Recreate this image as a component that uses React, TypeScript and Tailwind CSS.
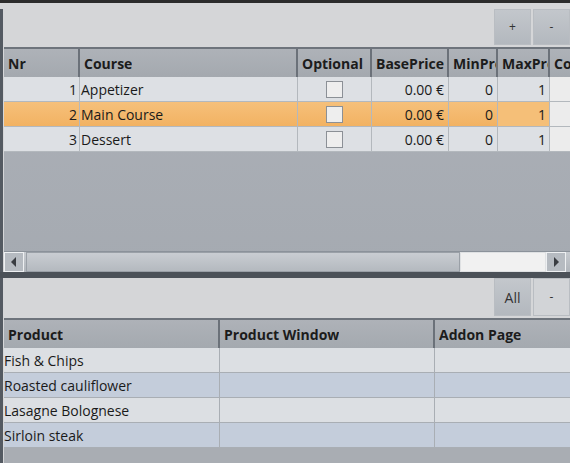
import React from 'react';

type Col = { key: string; title: string; width: number };

const courseCols: Col[] = [
  { key: 'nr', title: 'Nr', width: 76 },
  { key: 'course', title: 'Course', width: 218 },
  { key: 'optional', title: 'Optional', width: 74 },
  { key: 'basePrice', title: 'BasePrice', width: 77 },
  { key: 'minProducts', title: 'MinProducts', width: 49 },
  { key: 'maxProducts', title: 'MaxProducts', width: 52 },
  { key: 'color', title: 'Color', width: 60 },
];

const courses = [
  { nr: 1, course: 'Appetizer', basePrice: '0.00 €', min: 0, max: 1 },
  { nr: 2, course: 'Main Course', basePrice: '0.00 €', min: 0, max: 1 },
  { nr: 3, course: 'Dessert', basePrice: '0.00 €', min: 0, max: 1 },
];

const productCols: Col[] = [
  { key: 'product', title: 'Product', width: 216 },
  { key: 'window', title: 'Product Window', width: 215 },
  { key: 'addon', title: 'Addon Page', width: 140 },
];

const products = ['Fish & Chips', 'Roasted cauliflower', 'Lasagne Bolognese', 'Sirloin steak'];

const font = { fontFamily: '"Open Sans", "Noto Sans", sans-serif' };

const ToolButton: React.FC<{ label: string; pressed?: boolean; className?: string }> = ({
  label,
  pressed,
  className,
}) => (
  <button
    className={`w-[37px] flex items-center justify-center text-[12px] text-[#333] border border-[#b9bdc2] ${
      pressed ? 'bg-gradient-to-b from-[#c3c7cc] to-[#b3b8be]' : 'bg-[#d2d4d7]'
    } ${className ?? ''}`}
  >
    {label}
  </button>
);

const HeaderRow: React.FC<{ cols: Col[] }> = ({ cols }) => (
  <div className="flex h-[30px] border-t-2 border-[#6e747c] bg-gradient-to-b from-[#aeb2b8] to-[#a4a9af]">
    {cols.map((c) => (
      <div
        key={c.key}
        style={{ width: c.width }}
        className="shrink-0 flex items-center pl-[4px] border-r-2 border-[#6b7179] overflow-hidden whitespace-nowrap text-[14px] font-bold text-[#1c1c1c]"
      >
        <span className="block overflow-hidden">{c.title}</span>
      </div>
    ))}
  </div>
);

const Checkbox = () => (
  <div className="w-[17px] h-[17px] border border-[#8b9096] bg-[#eeeeee]" />
);

const ArrowButton: React.FC<{ dir: 'left' | 'right' }> = ({ dir }) => (
  <div className="w-[20px] h-full shrink-0 border border-[#eef0f2] bg-[#b6bbc1] flex items-center justify-center">
    <svg width="6" height="10" viewBox="0 0 6 10">
      <path d={dir === 'left' ? 'M5 0 L0 5 L5 10 Z' : 'M1 0 L6 5 L1 10 Z'} fill="#3a3d42" />
    </svg>
  </div>
);

export default function App() {
  return (
    <div style={font} className="w-[570px] h-[463px] overflow-hidden bg-[#d5d6d8] flex flex-col">
      <div className="h-[3px] shrink-0 bg-[#2c2c2c]" />

      <div className="flex flex-1 min-h-0">
        {/* dark frame edge on the left */}
        <div className="w-[3px] shrink-0 bg-[#545a62] mt-[6px]" />

        <div className="flex-1 min-w-0 flex flex-col pl-[1px]">
          {/* courses toolbar */}
          <div className="h-[44px] shrink-0 flex justify-end items-end pb-[2px] gap-[2px]">
            <ToolButton label="+" pressed className="h-[36px]" />
            <ToolButton label="-" pressed className="h-[36px]" />
          </div>

          {/* courses grid */}
          <div className="h-[225px] shrink-0 flex flex-col bg-gradient-to-b from-[#acb0b7] to-[#a5aab1] overflow-hidden">
            <HeaderRow cols={courseCols} />
            {courses.map((r) => {
              const selected = r.nr === 2;
              return (
                <div
                  key={r.nr}
                  className={`flex h-[25px] shrink-0 border-b border-[#b3b8bd] text-[14px] text-[#1a1a1a] ${
                    selected ? 'bg-gradient-to-b from-[#f6c07a] to-[#f2b262]' : 'bg-[#dde0e4]'
                  }`}
                >
                  <div style={{ width: 76 }} className="shrink-0 flex items-center justify-end pr-[2px] border-r border-[#b3b8bd]">
                    {r.nr}
                  </div>
                  <div style={{ width: 218 }} className="shrink-0 flex items-center pl-[1px] border-r border-[#b3b8bd]">
                    {r.course}
                  </div>
                  <div style={{ width: 74 }} className="shrink-0 flex items-center justify-center border-r border-[#b3b8bd]">
                    <Checkbox />
                  </div>
                  <div style={{ width: 77 }} className="shrink-0 flex items-center justify-end pr-[4px] border-r border-[#b3b8bd]">
                    {r.basePrice}
                  </div>
                  <div style={{ width: 49 }} className="shrink-0 flex items-center justify-end pr-[4px] border-r border-[#b3b8bd]">
                    {r.min}
                  </div>
                  <div
                    style={{ width: 52 }}
                    className={`shrink-0 flex items-center justify-end pr-[3px] border-r border-[#b3b8bd] ${
                      selected ? 'bg-[#f5bf78]' : ''
                    }`}
                  >
                    {r.max}
                  </div>
                  <div className="flex-1 bg-[#ececec]" />
                </div>
              );
            })}
            <div className="flex-1" />

            {/* horizontal scrollbar */}
            <div className="h-[21px] shrink-0 flex border-t border-[#8b929a] bg-gradient-to-b from-[#c7cbd0] to-[#b0b5bb]">
              <ArrowButton dir="left" />
              <div className="flex-1 flex">
                <div className="flex-1 border border-[#9aa0a7] bg-gradient-to-b from-[#c9cdd2] to-[#b4b9bf] ml-[2px]" />
                <div className="w-[86px] shrink-0 bg-[#f1f1f1] border border-[#dfe1e3]" />
              </div>
              <ArrowButton dir="right" />
              <div className="w-[4px] shrink-0" />
            </div>
          </div>

          <div className="h-[6px] shrink-0 bg-[#4b5158] -ml-[4px]" />

          {/* products toolbar */}
          <div className="h-[40px] shrink-0 flex justify-end gap-[2px]">
            <ToolButton label="All" pressed className="h-[38px] text-[14px] text-[#222]" />
            <ToolButton label="-" className="h-[38px]" />
          </div>

          {/* products grid */}
          <div className="flex-1 flex flex-col bg-[#a9adb3]">
            <HeaderRow cols={productCols} />
            {products.map((p, i) => (
              <div
                key={p}
                className={`flex h-[25px] shrink-0 border-b border-[#a9aeb4] text-[14px] text-[#1a1a1a] ${
                  i % 2 === 0 ? 'bg-[#dcdfe3]' : 'bg-[#c4cddb]'
                }`}
              >
                <div style={{ width: 216 }} className="shrink-0 flex items-center border-r border-[#a9aeb4] whitespace-nowrap">
                  {p}
                </div>
                <div style={{ width: 215 }} className="shrink-0 border-r border-[#a9aeb4]" />
                <div className="flex-1" />
              </div>
            ))}
          </div>
        </div>
      </div>
    </div>
  );
}
